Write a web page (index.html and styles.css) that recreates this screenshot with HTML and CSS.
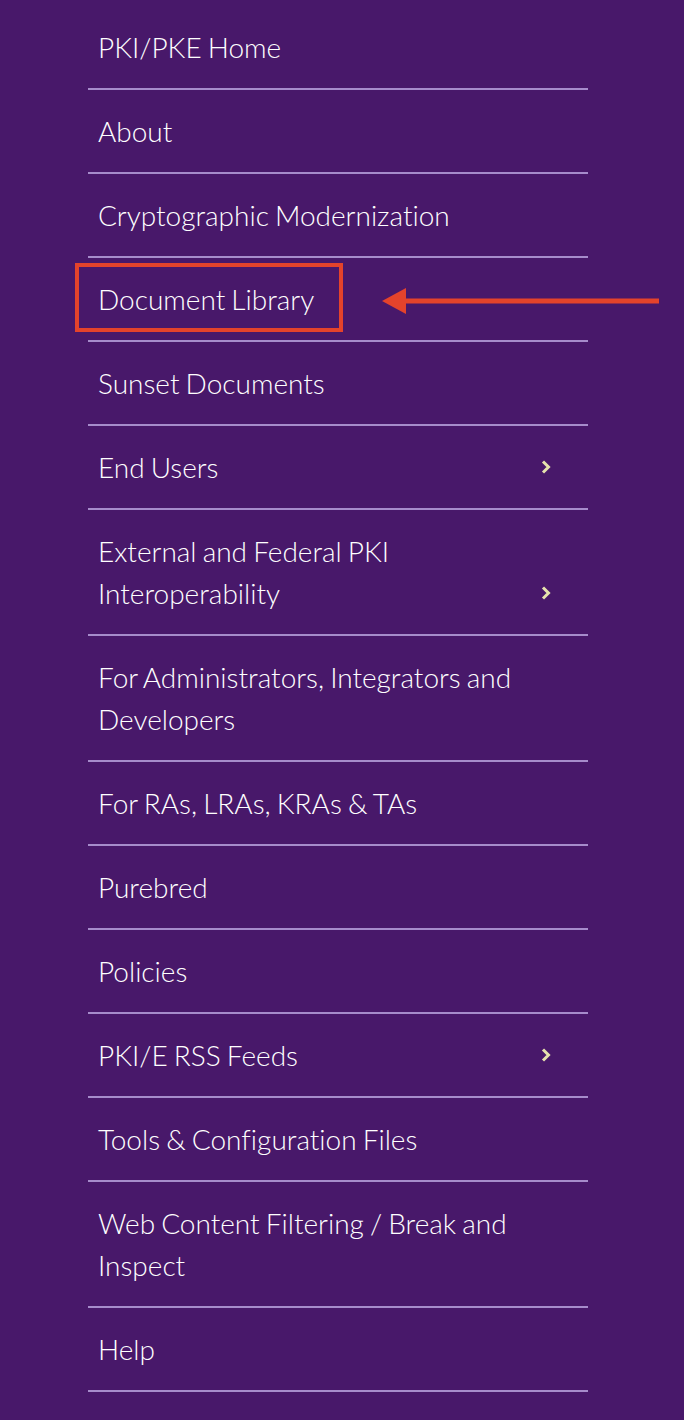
FILE: index.html
```html
<!DOCTYPE html>
<html lang="en">
<head>
<meta charset="utf-8">
<title>PKI/PKE Menu</title>
<link rel="stylesheet" href="styles.css">
</head>
<body>
<nav class="menu">
  <ul class="menu-list">
    <li class="menu-item"><a class="menu-link" href="#"><span class="label">PKI/PKE Home</span></a></li>
    <li class="menu-item"><a class="menu-link" href="#"><span class="label">About</span></a></li>
    <li class="menu-item"><a class="menu-link" href="#"><span class="label">Cryptographic Modernization</span></a></li>
    <li class="menu-item"><a class="menu-link" href="#"><span class="label">Document Library</span></a></li>
    <li class="menu-item"><a class="menu-link" href="#"><span class="label">Sunset Documents</span></a></li>
    <li class="menu-item"><a class="menu-link" href="#"><span class="label">End Users</span><span class="chev"><svg width="12" height="16" viewBox="0 0 12 16"><polyline points="3,2.5 8.5,8 3,13.5" fill="none" stroke="#e6e2ad" stroke-width="3"/></svg></span></a></li>
    <li class="menu-item"><a class="menu-link" href="#"><span class="label">External and Federal PKI Interoperability</span><span class="chev"><svg width="12" height="16" viewBox="0 0 12 16"><polyline points="3,2.5 8.5,8 3,13.5" fill="none" stroke="#e6e2ad" stroke-width="3"/></svg></span></a></li>
    <li class="menu-item"><a class="menu-link" href="#"><span class="label">For Administrators, Integrators and Developers</span></a></li>
    <li class="menu-item"><a class="menu-link" href="#"><span class="label">For RAs, LRAs, KRAs &amp; TAs</span></a></li>
    <li class="menu-item"><a class="menu-link" href="#"><span class="label">Purebred</span></a></li>
    <li class="menu-item"><a class="menu-link" href="#"><span class="label">Policies</span></a></li>
    <li class="menu-item"><a class="menu-link" href="#"><span class="label">PKI/E RSS Feeds</span><span class="chev"><svg width="12" height="16" viewBox="0 0 12 16"><polyline points="3,2.5 8.5,8 3,13.5" fill="none" stroke="#e6e2ad" stroke-width="3"/></svg></span></a></li>
    <li class="menu-item"><a class="menu-link" href="#"><span class="label">Tools &amp; Configuration Files</span></a></li>
    <li class="menu-item"><a class="menu-link" href="#"><span class="label">Web Content Filtering / Break and Inspect</span></a></li>
    <li class="menu-item"><a class="menu-link" href="#"><span class="label">Help</span></a></li>
  </ul>
</nav>
<div class="highlight-box"></div>
<svg class="arrow" width="290" height="32" viewBox="0 0 290 32">
  <polygon points="2,16 26,3 26,29" fill="#e4432b"/>
  <rect x="24" y="13.5" width="255" height="5" fill="#e4432b"/>
</svg>
</body>
</html>
```

FILE: styles.css
```css
html, body {
  margin: 0;
  padding: 0;
}
body {
  background: #48186a;
  font-family: Lato, "Open Sans", sans-serif;
  min-height: 1420px;
  position: relative;
}
.menu {
  padding-top: 6px;
  padding-left: 88px;
}
.menu-list {
  list-style: none;
  margin: 0;
  padding: 0;
  width: 500px;
}
.menu-item {
  border-bottom: 2px solid #a68ccb;
}
.menu-link {
  display: flex;
  align-items: flex-end;
  padding: 20px 0 20px 10px;
  color: #ffffff;
  text-decoration: none;
  font-size: 28px;
  font-weight: 300;
  line-height: 42px;
  word-spacing: -1.5px;
  font-variant-ligatures: none;
}
.label {
  flex: 1;
  padding-right: 48px;
}
.chev {
  width: 48px;
  height: 42px;
  margin-left: -48px;
  display: flex;
  align-items: center;
  padding-left: 0;
  box-sizing: border-box;
}
.chev svg {
  display: block;
}
.highlight-box {
  position: absolute;
  left: 75px;
  top: 263px;
  width: 268px;
  height: 69px;
  border: 4px solid #e4432b;
  box-sizing: border-box;
}
.arrow {
  position: absolute;
  left: 380px;
  top: 285px;
}
```
